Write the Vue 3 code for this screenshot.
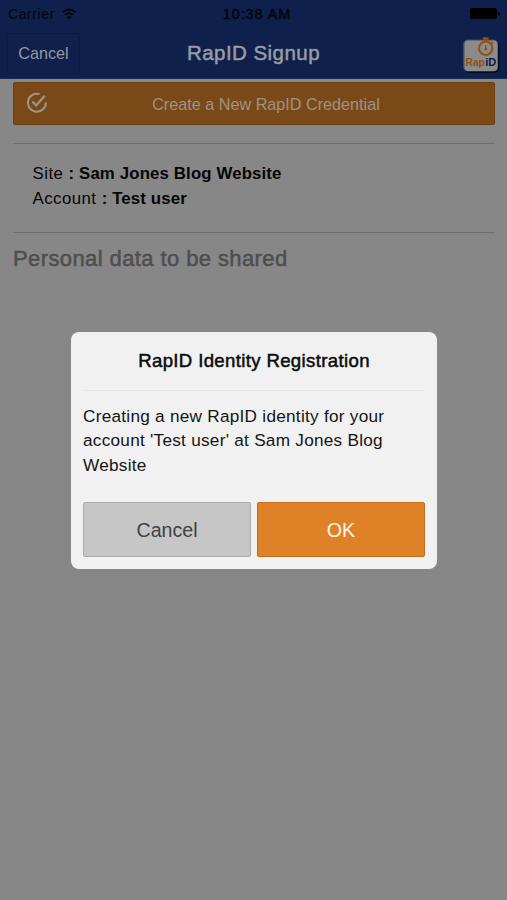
<script setup>
const details = [
  { label: 'Site', value: 'Sam Jones Blog Website' },
  { label: 'Account', value: 'Test user' },
]
</script>

<template>
  <div class="screen">
    <header class="header">
      <div class="status">
        <div class="carrier">
          <span>Carrier</span>
          <svg width="16" height="12" viewBox="0 0 16 12" fill="none">
            <path d="M1.600 4.300C5.200.8 10.800.8 14.400 4.300" stroke="#04070f" stroke-width="1.900" />
            <path d="M4 6.900C6.300 4.800 9.700 4.800 12 6.900" stroke="#04070f" stroke-width="1.800" />
            <path d="M8 11.600L5.500 8.900C7 7.700 9 7.700 10.500 8.900Z" fill="#04070f" />
          </svg>
        </div>
        <span class="time">10:38 AM</span>
        <div class="power"><i class="cell"></i><i class="nub"></i></div>
      </div>
      <div class="nav">
        <div class="side"><button class="back">Cancel</button></div>
        <h1>RapID Signup</h1>
        <div class="side end">
          <svg class="logo" width="42" height="38" viewBox="0 0 42 38">
            <rect x="6" y="5" width="34.500" height="32" rx="5" fill="#070d20" />
            <rect x="4" y="3.500" width="35" height="32" rx="5" fill="#4b4a5b" />
            <rect x="5.500" y="4.500" width="33" height="30.500" rx="3.500" fill="#8b8b8b" />
            <g fill="none" stroke="#96500e">
              <circle cx="26.700" cy="12.300" r="6.700" stroke-width="2" />
              <path d="M26.700 9V13.500" stroke-width="1.300" />
              <path d="M23.700 2.500H29.700" stroke-width="2.400" />
              <path d="M26.700 3V6M32 6.200L33.800 7.700" stroke-width="1.800" />
            </g>
            <circle cx="26.700" cy="13.300" r="1.300" fill="#96500e" />
            <text x="6.600" y="30" class="mark rap">Rap</text>
            <text x="26.300" y="30" class="mark id">iD</text>
          </svg>
        </div>
      </div>
    </header>

    <main class="content">
      <div class="banner">
        <svg width="22" height="22" viewBox="0 0 22 22" fill="none" stroke="#9b958d" stroke-width="2">
          <path d="M13.600 2.100A9 9 0 1 0 19.900 10.500" />
          <path d="M6.300 9.500L10.200 13.400L18.700 3.700" stroke-width="2.200" />
        </svg>
        <span>Create a New RapID Credential</span>
      </div>
      <div class="details">
        <p v-for="row in details" :key="row.label">{{ row.label }} <b>: {{ row.value }}</b></p>
      </div>
      <h2>Personal data to be shared</h2>
    </main>

    <div class="overlay">
      <section class="dialog">
        <h3>RapID Identity Registration</h3>
        <div class="body">
          <p>Creating a new RapID identity for your account 'Test user' at Sam Jones Blog Website</p>
          <div class="actions">
            <button class="action">Cancel</button>
            <button class="action ok">OK</button>
          </div>
        </div>
      </section>
    </div>
  </div>
</template>

<style>
body { background: #878787; }
</style>

<style scoped>
* { box-sizing: border-box; margin: 0; }
.screen {
  position: relative;
  height: 900px;
  overflow: hidden;
  background: #878787;
  color: #050505;
  font-family: "Liberation Sans", Arial, sans-serif;
}
button { font-family: inherit; padding: 0; }
.header { height: 79px; background: #0e204b; border-bottom: 1px solid #1b2a50; }
.status {
  display: grid;
  grid-template-columns: 1fr auto 1fr;
  align-items: center;
  height: 27px;
  padding: 0 7px 0 8px;
  color: #04070f;
  font-size: 14px;
}
.carrier { display: flex; align-items: center; gap: 6px; letter-spacing: 0.600px; }
.time { font-size: 14.500px; letter-spacing: 0.900px; padding-left: 6px; -webkit-text-stroke: 0.500px #04070f; }
.power { display: flex; align-items: center; justify-content: flex-end; gap: 1px; }
.cell { width: 27px; height: 11px; border-radius: 2px; background: #000; }
.nub { width: 2px; height: 4px; border-radius: 0 2px 2px 0; background: #04070f; }
.nav { display: flex; align-items: center; height: 52px; }
.side { width: 80px; padding-left: 7px; display: flex; }
.end { padding: 4px 6px 0 0; justify-content: flex-end; }
.back {
  width: 73px;
  height: 41px;
  border: 1px solid #0b1a40;
  border-radius: 3px;
  background: #0e204b;
  color: #95979d;
  font-size: 16.200px;
}
h1 {
  flex: 1;
  margin-top: -1px;
  text-align: center;
  font-size: 20.500px;
  font-weight: 400;
  letter-spacing: 0.450px;
  color: #9a9ca3;
  -webkit-text-stroke: 0.500px #9a9ca3;
}
.mark { font-weight: 700; }
.rap { font-size: 10.200px; fill: #96500e; }
.id { font-size: 11px; fill: #0c1940; }
.content { padding: 3px 12px 0 13px; }
.banner {
  display: flex;
  align-items: center;
  height: 43px;
  padding: 1px 0 0 12px;
  border: 1px solid #6b3d10;
  border-radius: 2px;
  background: #7b4917;
  color: #9b9389;
  font-size: 16.200px;
}
.banner svg { margin-top: -2px; }
.banner span { flex: 1; text-align: center; padding-right: 10px; }
.details {
  height: 90px;
  margin-top: 18px;
  padding: 18px 19.500px 0;
  border-top: 1px solid #6e6e6e;
  border-bottom: 1px solid #6e6e6e;
  font-size: 16.800px;
  line-height: 24.500px;
  letter-spacing: 0.480px;
}
.details b { font-size: 16.800px; letter-spacing: 0.150px; }
h2 {
  margin-top: 13px;
  font-size: 22px;
  line-height: 26px;
  font-weight: 400;
  letter-spacing: 0.400px;
  color: #4e4e4e;
  -webkit-text-stroke: 0.500px #4e4e4e;
}
.overlay { position: absolute; inset: 0; display: flex; justify-content: center; align-items: flex-start; padding: 332px 0 0 1px; }
.dialog {
  width: 366px;
  height: 237px;
  padding: 0 12px;
  border-radius: 8px;
  background: #f1f1f1;
}
h3 {
  height: 59px;
  border-bottom: 1px solid #e7e7e7;
  line-height: 58px;
  text-align: center;
  font-size: 18.600px;
  font-weight: 400;
  letter-spacing: 0.350px;
  color: #0c0c0c;
  -webkit-text-stroke: 0.500px #0c0c0c;
}
.body p { margin: 13px -5px 0 0; height: 98px; font-size: 17.200px; line-height: 24.400px; letter-spacing: 0.260px; color: #151515; }
.actions { display: grid; grid-template-columns: 1fr 1fr; gap: 6px; }
.action {
  height: 55px;
  padding-top: 1px;
  border: 1px solid #aaa;
  border-radius: 2px;
  background: #c6c6c6;
  color: #414141;
  font-size: 19.600px;
}
.ok { border-color: #c56d1b; background: #df8227; color: #fff5e8; }
</style>
